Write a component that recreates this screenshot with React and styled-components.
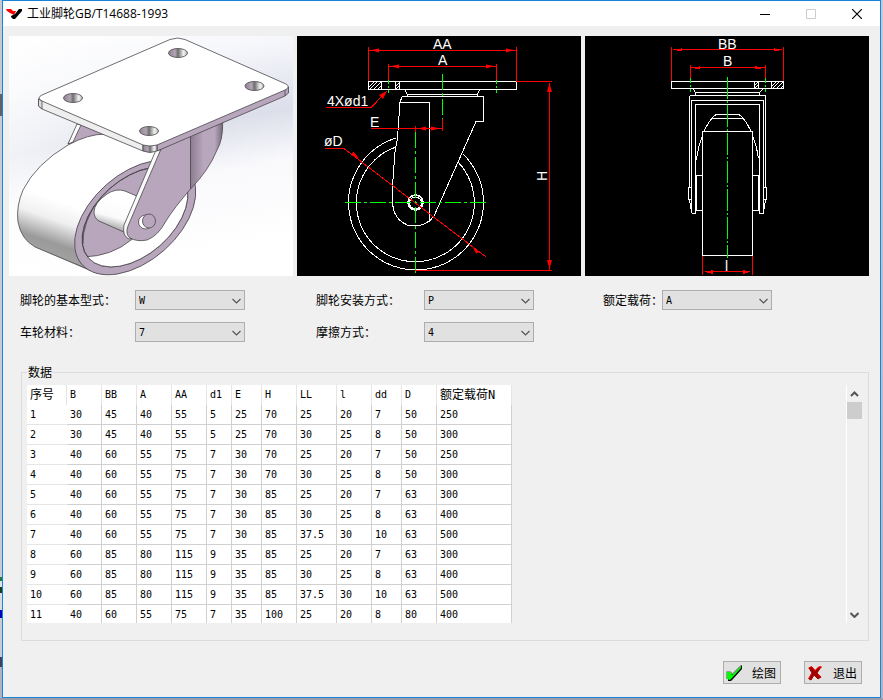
import React, { useState } from "react";
import styled, { createGlobalStyle } from "styled-components";

const columns = [
  { label: "序号", width: 40 },
  { label: "B", width: 35 },
  { label: "BB", width: 35 },
  { label: "A", width: 35 },
  { label: "AA", width: 35 },
  { label: "d1", width: 25 },
  { label: "E", width: 30 },
  { label: "H", width: 35 },
  { label: "LL", width: 40 },
  { label: "l", width: 35 },
  { label: "dd", width: 30 },
  { label: "D", width: 35 },
  { label: "额定载荷N", width: 75 },
];

const rows = [
  [1, 30, 45, 40, 55, 5, 25, 70, 25, 20, 7, 50, 250],
  [2, 30, 45, 40, 55, 5, 25, 70, 30, 25, 8, 50, 300],
  [3, 40, 60, 55, 75, 7, 30, 70, 25, 20, 7, 50, 250],
  [4, 40, 60, 55, 75, 7, 30, 70, 30, 25, 8, 50, 300],
  [5, 40, 60, 55, 75, 7, 30, 85, 25, 20, 7, 63, 300],
  [6, 40, 60, 55, 75, 7, 30, 85, 30, 25, 8, 63, 400],
  [7, 40, 60, 55, 75, 7, 30, 85, 37.5, 30, 10, 63, 500],
  [8, 60, 85, 80, 115, 9, 35, 85, 25, 20, 7, 63, 300],
  [9, 60, 85, 80, 115, 9, 35, 85, 30, 25, 8, 63, 400],
  [10, 60, 85, 80, 115, 9, 35, 85, 37.5, 30, 10, 63, 500],
  [11, 40, 60, 55, 75, 7, 35, 100, 25, 20, 8, 80, 400],
];

const fields = [
  { id: "type", label: "脚轮的基本型式：", options: ["W", "G"], width: 115 },
  { id: "mount", label: "脚轮安装方式：", options: ["P", "L"], width: 108 },
  { id: "load", label: "额定载荷：", options: ["A", "B"], width: 59 },
  { id: "material", label: "车轮材料：", options: ["7", "1"], width: 115 },
  { id: "friction", label: "摩擦方式：", options: ["4", "1"], width: 108 },
];

const CasterView = () => (
  <Drawing viewBox="9 36 284 240" role="img">
    <defs>
      <linearGradient id="sky" x1="0" y1="0" x2="0.2" y2="1">
        <stop offset="0" stopColor="#ffffff" />
        <stop offset="0.2" stopColor="#f6f7fb" />
        <stop offset="0.48" stopColor="#dcdfea" />
        <stop offset="0.68" stopColor="#f9f9fc" />
        <stop offset="1" stopColor="#ffffff" />
      </linearGradient>
      <linearGradient id="glow">
        <stop offset="0" stopColor="#fff" stopOpacity="0.6" />
        <stop offset="0.7" stopColor="#fff" stopOpacity="0" />
      </linearGradient>
      <linearGradient id="tread" x1="0.35" y1="0.5" x2="0.2" y2="0.95">
        <stop offset="0" stopColor="#ffffff" />
        <stop offset="0.3" stopColor="#f0f0f0" />
        <stop offset="0.65" stopColor="#9a9a9a" />
        <stop offset="1" stopColor="#a8a8a8" />
      </linearGradient>
      <linearGradient id="hole">
        <stop offset="0" stopColor="#8e8291" />
        <stop offset="0.35" stopColor="#b3a5b6" />
        <stop offset="0.5" stopColor="#6e6e6e" />
        <stop offset="0.8" stopColor="#f4f4f4" />
        <stop offset="1" stopColor="#aaaaaa" />
      </linearGradient>
      <linearGradient id="bend">
        <stop offset="0" stopColor="#8b7d8f" />
        <stop offset="0.4" stopColor="#b8a6bc" />
        <stop offset="0.75" stopColor="#b8a6bc" />
        <stop offset="1" stopColor="#75697a" />
      </linearGradient>
      <linearGradient id="hub" x1="0.6" y1="0.3" x2="0.4" y2="1">
        <stop offset="0" stopColor="#ffffff" />
        <stop offset="0.5" stopColor="#fafafa" />
        <stop offset="1" stopColor="#8a8a8a" />
      </linearGradient>
      <clipPath id="rim">
        <ellipse
          cx="135"
          cy="217"
          rx="62"
          ry="38"
          transform="rotate(-41.4 135 217)"
        />
      </clipPath>
    </defs>
    <rect x="9" y="36" width="284" height="240" fill="url(#sky)" />
    <rect x="9" y="36" width="284" height="240" fill="url(#glow)" />
    <g stroke="#4a474c" strokeWidth="0.8" strokeLinejoin="round">
      <path d="M79 124L105 134L92 138L68 144Z" fill="#b8a6bc" />
      <path d="M77 124L81 125L73 142L68 144Z" fill="#ffffff" />
      <path
        d="M152 160L106 134Q88 134 68 145Q36 164 23 190Q16 206 18 222Q21 239 35 247L90 271Z"
        fill="url(#tread)"
        stroke="none"
      />
      <path
        d="M106 134Q88 134 68 145Q36 164 23 190Q16 206 18 222Q21 239 35 247L90 270"
        fill="none"
      />
      <path d="M106 134L160 136L158 164L140 168Z" fill="#ffffff" stroke="none" />
      <ellipse
        cx="135.2"
        cy="217.5"
        rx="71"
        ry="43.7"
        fill="#b8a6bc"
        transform="rotate(-41.4 135.2 217.5)"
      />
      <ellipse
        cx="135"
        cy="217"
        rx="62"
        ry="38"
        fill="#b8a6bc"
        transform="rotate(-41.4 135 217)"
      />
      <g clipPath="url(#rim)">
        <path
          d="M84 257Q112 256 131 240L166 216L192 182L200 240L140 280L90 275Z"
          fill="#ffffff"
        />
        <path d="M83 244Q82 222 100 198Q122 170 156 166" fill="none" />
      </g>
      <ellipse
        cx="135"
        cy="217"
        rx="62"
        ry="38"
        fill="none"
        transform="rotate(-41.4 135 217)"
      />
      <path
        d="M139 197L125 191Q116 188 107 194Q94 203 94 212Q94 218 99 221L126 233Z"
        fill="url(#hub)"
      />
      <path d="M190.500 134L222.700 122Q223 140 217 150Q209 170 190.500 189Z" fill="url(#bend)" />
      <path
        d="M156 150L124 225Q122 236 129 239L134 238L161 150Z"
        fill="#fafafa"
      />
      <path
        d="M161 149L128 226Q125 234 130 238Q137 242 147 240Q158 236 166 221Q174 208 190.500 189L190.500 134Z"
        fill="#b8a6bc"
      />
      <ellipse cx="145.500" cy="222" rx="7" ry="7" fill="#ffffff" />
      <ellipse cx="149" cy="221" rx="6.500" ry="7" fill="#b8a6bc" />
      <path d="M38.500 99L38.500 106L42 109L143 151L143 144L42 100Z" fill="#eeeeee" />
      <path d="M38.500 99V106L42 109V101Z" fill="#dddddd" />
      <path d="M157 144L288.500 87V93L285 96L157 151Z" fill="#b8a6bc" />
      <path d="M285 89V96" />
      <path d="M143 144V151Q150 154 157 151V144Z" fill="url(#hole)" />
      <path
        d="M170 39.500Q178 36.500 185 39.500L286 84Q291 87 285 90L157 145Q150 147 143 145L42 101Q36 98 42 95Z"
        fill="#ffffff"
      />
      <g fill="url(#hole)">
        <ellipse cx="73" cy="98" rx="9.500" ry="4.500" />
        <ellipse cx="178" cy="53" rx="9.500" ry="4.500" />
        <ellipse cx="254.500" cy="86" rx="9.500" ry="4.500" />
        <ellipse cx="149" cy="131" rx="9.500" ry="4.500" />
      </g>
    </g>
  </Drawing>
);

const SideView = () => (
  <Drawing viewBox="297 36 284 240" role="img">
    <rect x="297" y="36" width="284" height="240" fill="#000" />
    <g fill="none" stroke="#fff" shapeRendering="crispEdges">
      <path d="M368.500 81.500H516.500V89.500H368.500ZM381.500 81V89M395.500 81V89M399.500 81V89" />
      <path d="M369 87L374 82M370 89L377 82M374 89L381 82M378 89L381 86M396 86L399 83M396 89L399 86" />
      <path d="M405.500 90V91L407.500 94.500H477.500L479.500 90M407.500 94V96M477.500 94V96" />
      <path d="M402 96.500H483.500V121.500H476L434 216L429.500 221V102.500H400" />
      <path d="M402 97L400 102L397.500 138L395 152L392.500 186V204Q394 219 407 225Q420 228 429 221" />
      <path d="M396 138A67.500 67.500 0 1 0 463 154" />
      <path d="M396 147A59 59 0 1 0 458 162" />
      <circle cx="415.500" cy="202.500" r="7.500" strokeWidth="1.500" />
      <circle cx="415.500" cy="203" r="6" />
    </g>
    <g fill="none" stroke="#0f0" shapeRendering="crispEdges">
      <path d="M442.500 74V119M415.500 132V275" strokeDasharray="16 3 3 3" />
      <path d="M388.500 78V93M496.500 78V93" strokeDasharray="6 2 2 2" />
      <path d="M344.500 202.500H487" strokeDasharray="16 3 3 3" />
    </g>
    <g fill="none" stroke="#f00" shapeRendering="crispEdges">
      <path d="M368.500 47V81M516.500 47V81M369 50.500H516M388.500 64V80M496.500 64V80M389 66.500H496" />
      <path d="M326 107.500H371L387 91M371 128.500H442M442.500 119V131M415.500 126V132" />
      <path d="M325 148.500H344L486 257M516 81.500H552M549.500 83V270M415 270.500H552" />
    </g>
    <g fill="#f00">
      <path d="M371 50L379 48.500V52.500ZM514 50L506 48.500V52.500ZM391 66L399 64.500V68.500ZM494 66L486 64.500V68.500Z" />
      <path d="M418 128.500L426 126.500V130.500ZM440 128.500L431 126.500V130.500Z" />
      <path d="M387 91L379 95L383 99ZM359 158.500L351 155L353.500 151.500ZM472 246L479 252L476 253.500Z" />
      <path d="M549.500 83L547 92H552ZM549.500 269L547 260H552Z" />
    </g>
    <Annotation>
      <text x="433" y="49">AA</text>
      <text x="438" y="65">A</text>
      <text x="327" y="106">4Xød1</text>
      <text x="370" y="127">E</text>
      <text x="324" y="146">øD</text>
      <text transform="translate(547 181) rotate(-90)">H</text>
    </Annotation>
  </Drawing>
);

const FrontView = () => (
  <Drawing viewBox="585 36 284 240" role="img">
    <rect x="585" y="36" width="284" height="240" fill="#000" />
    <g fill="none" stroke="#fff" shapeRendering="crispEdges">
      <path d="M671.500 81.500H783.500V88.500H671.500ZM754.500 81V88M758.500 81V88M771.500 81V88" />
      <path d="M755 85L758 82M755 88L758 85M772 86L776 82M773 88L779 82M777 88L783 82M781 88L783 86" />
      <path d="M693.500 89L695.500 92.500H759.500L763 89M695.500 92V95M759.500 92V95" />
      <path d="M690 95.500H766M689.500 96V187M765.500 96V187" />
      <path d="M691.500 213V100.500H763.500V213.500H759.500V104.500H695.500V213.500H691.500" />
      <path d="M691.500 187.500H688.500V199.500H691.500M763.500 187.500H766.500V199.500H763.500M689.500 200L691 209M765.500 200L764 209" />
      <path d="M702.500 175.500H696.500V210.500H702.500M752.500 175.500H758.500V210.500H752.500" />
      <path d="M702.500 131.500H752.500V255.500H702.500Z" />
      <path d="M704 131Q708 123 712 118L716 114.500H739L743 118Q747 123 751 131M712 118.500H743" />
      <path d="M702 137Q698 147 696.500 160M753 137Q757 147 758.500 158" />
    </g>
    <g fill="none" stroke="#f00" shapeRendering="crispEdges">
      <path d="M671.500 47V81M783.500 47V81M673 49.500H782M690.500 65V79M765.500 65V79M690 67.500H765" />
      <path d="M702.500 256V275M752.500 256V275M705 271.500H750" />
    </g>
    <g fill="#f00" shapeRendering="crispEdges">
      <path d="M676 50L682 48V51H677ZM779 50L774 48V51H779ZM694 68L700 66V69H695ZM761 68L755 66V69H760Z" />
      <path d="M705 272L713 270V274ZM750 272L743 270V274Z" />
    </g>
    <g fill="none" stroke="#0f0" shapeRendering="crispEdges">
      <path d="M727.500 77V258" strokeDasharray="22 2 2 2" />
      <path d="M690.500 78V92M765.500 78V92" strokeDasharray="5 2 2 2" />
    </g>
    <Annotation>
      <text x="718" y="49">BB</text>
      <text x="723" y="66">B</text>
      <text x="725" y="271">l</text>
    </Annotation>
  </Drawing>
);

const Chevron = ({ up, bold }) => (
  <svg width="9" height="6" viewBox="0 0 9 6">
    <path
      d={up ? "M1 5L4.500 1.500L8 5" : "M0.500 1L4.500 5L8.500 1"}
      fill="none"
      stroke="#555"
      strokeWidth={bold ? 2 : 1.2}
    />
  </svg>
);

const App = () => {
  const [values, setValues] = useState({
    type: "W",
    mount: "P",
    load: "A",
    material: "7",
    friction: "4",
  });

  return (
    <>
      <GlobalStyle />
      <Desktop>
        <Window>
          <TitleBar>
            <svg width="17" height="12" viewBox="0 0 17 12">
              <path d="M0 1H5L7 3L10 3L8 7L4 5L1 3Z" fill="#f00" />
              <path d="M5 8L9 6L13 1H16V3L9 11H7L5 9Z" fill="#000" />
            </svg>
            <Title>工业脚轮GB/T14688-1993</Title>
            <WindowButton aria-label="最小化">
              <svg width="10" height="10" viewBox="0 0 10 10">
                <path d="M0 5.500H10" stroke="#000" />
              </svg>
            </WindowButton>
            <WindowButton aria-label="最大化" disabled>
              <svg width="10" height="10" viewBox="0 0 10 10">
                <path d="M0.500 0.500H9.500V9.500H0.500Z" fill="none" stroke="#ccc" />
              </svg>
            </WindowButton>
            <WindowButton aria-label="关闭">
              <svg width="10" height="10" viewBox="0 0 10 10">
                <path d="M0 0L10 10M10 0L0 10" stroke="#000" strokeWidth="1.200" />
              </svg>
            </WindowButton>
          </TitleBar>
          <Content>
            <Previews>
              <CasterView />
              <SideView />
              <FrontView />
            </Previews>
            <Fields>
              {fields.map(({ id, label, options, width }) => (
                <Field key={id}>
                  <FieldLabel htmlFor={id} $width={width}>
                    {label}
                  </FieldLabel>
                  <SelectWrapper>
                    <Select
                      id={id}
                      value={values[id]}
                      onChange={(e) =>
                        setValues({ ...values, [id]: e.target.value })
                      }
                    >
                      {options.map((option) => (
                        <option key={option}>{option}</option>
                      ))}
                    </Select>
                    <Chevron />
                  </SelectWrapper>
                </Field>
              ))}
            </Fields>
            <GroupBox>
              <legend>数据</legend>
              <GridView>
                <GridScroll>
                  <DataTable>
                    <colgroup>
                      {columns.map(({ label, width }) => (
                        <col key={label} style={{ width }} />
                      ))}
                    </colgroup>
                    <thead>
                      <tr>
                        {columns.map(({ label }) => (
                          <th key={label} scope="col">
                            {label}
                          </th>
                        ))}
                      </tr>
                    </thead>
                    <tbody>
                      {rows.map((row) => (
                        <tr key={row[0]}>
                          {row.map((cell, index) => (
                            <td key={index}>{cell}</td>
                          ))}
                        </tr>
                      ))}
                    </tbody>
                  </DataTable>
                </GridScroll>
                <ScrollBar>
                  <ScrollButton aria-label="向上">
                    <Chevron up bold />
                  </ScrollButton>
                  <ScrollThumb />
                  <ScrollButton aria-label="向下">
                    <Chevron bold />
                  </ScrollButton>
                </ScrollBar>
              </GridView>
            </GroupBox>
            <Actions>
              <ActionButton>
                <svg width="17" height="17" viewBox="0 0 17 17">
                  <path d="M2 8L5 8L7 10L16 1V5L7 15L5 17H2Z" fill="#000" />
                  <path d="M1 8H5L6 11L15 2V4L6 14L4 16L1 15Z" fill="#0f0" />
                  <path d="M0.500 15V7.500H4.500L6 10L15 1" fill="none" stroke="#999" />
                </svg>
                绘图
              </ActionButton>
              <ActionButton>
                <svg width="17" height="17" viewBox="0 0 17 17">
                  <path
                    d="M2 4L5 3L8 7L12 3H14L10 9L14 13L11 15L7 11L4 16L2 15L5 9Z"
                    fill="#a00000"
                    stroke="#a00000"
                  />
                  <path
                    d="M1.500 4L4.500 2.500L8 6.500L11.500 3H15M1.500 15L4.500 9.500M10.500 9.500L14 13.500"
                    fill="none"
                    stroke="#f00"
                  />
                </svg>
                退出
              </ActionButton>
            </Actions>
          </Content>
        </Window>
      </Desktop>
    </>
  );
};

const GlobalStyle = createGlobalStyle`
  * {
    box-sizing: border-box;
  }
  body {
    margin: 0;
    color: #000;
    font-family: "Noto Sans CJK SC", sans-serif;
    font-size: 12px;
    line-height: 16px;
  }
  button, select {
    font-family: inherit;
    font-size: inherit;
    color: inherit;
    border-radius: 0;
    margin: 0;
  }
`;

const Desktop = styled.div`
  display: flex;
  min-height: 100vh;
  padding: 0 2px;
  border-bottom: 2px solid #9c9caa;
  background:
    linear-gradient(
      #c4c9d4 0 94px,
      #606068 94px 116px,
      #c8ccd8 116px 577px,
      #1c7a3c 577px 581px,
      #dfe2e8 581px 587px,
      #104020 587px 593px,
      #d8dce4 593px 610px,
      #0000c0 610px 618px,
      #c8ccd8 618px 657px,
      #404060 657px 667px,
      #b0b2c4 667px
    ) left / 2px 100% no-repeat,
    linear-gradient(#c4c9d4, #b0b2c4);
`;

const Window = styled.main`
  flex: 1;
  display: flex;
  flex-direction: column;
  background: #f0f0f0;
  border: 1px solid #1883d7;
`;

const TitleBar = styled.header`
  display: flex;
  align-items: center;
  height: 25px;
  padding-left: 3px;
  background: #fff;
`;

const Title = styled.h1`
  flex: 1;
  margin: 0 0 0 4px;
  font-family: "Open Sans", "Noto Sans CJK SC", sans-serif;
  font-size: 12px;
  font-weight: 400;
`;

const WindowButton = styled.button`
  display: flex;
  align-items: center;
  justify-content: center;
  width: 46px;
  height: 25px;
  padding: 0;
  border: none;
  background: none;
`;

const Content = styled.div`
  flex: 1;
  display: flex;
  flex-direction: column;
  padding: 10px 11px 13px 6px;
`;

const Previews = styled.div`
  display: grid;
  grid-template-columns: repeat(3, 1fr);
  gap: 4px;
`;

const Drawing = styled.svg`
  display: block;
  width: 100%;
`;

const Annotation = styled.g`
  fill: #fff;
  font-family: "Liberation Sans", sans-serif;
  font-size: 14px;
`;

const Fields = styled.div`
  display: grid;
  grid-template-columns: 296px 287px 1fr;
  row-gap: 12px;
  margin: 14px 0 0 11px;
`;

const Field = styled.div`
  display: flex;
  align-items: center;
`;

const FieldLabel = styled.label`
  width: ${({ $width }) => $width}px;
  white-space: nowrap;
`;

const SelectWrapper = styled.div`
  position: relative;
  width: 110px;
  svg {
    position: absolute;
    right: 4px;
    top: 8px;
    pointer-events: none;
  }
`;

const Select = styled.select`
  display: block;
  appearance: none;
  width: 100%;
  height: 20px;
  padding: 0 3px;
  border: 1px solid #adadad;
  background: #e1e1e1;
  font-family: "DejaVu Sans Mono", monospace;
  font-size: 10px;
`;

const GroupBox = styled.fieldset`
  min-width: 0;
  margin: 22px 0 0 12px;
  padding: 5px 6px 17px 5px;
  border: 1px solid #dcdcdc;
  legend {
    padding: 0 1px;
  }
`;

const GridView = styled.div`
  display: flex;
  height: 238px;
`;

const GridScroll = styled.div`
  flex: 1;
  overflow: hidden;
  border-right: 1px solid #fff;
`;

const DataTable = styled.table`
  width: 485px;
  table-layout: fixed;
  border-collapse: separate;
  border-spacing: 0;
  background: #fff;
  font-family: "DejaVu Sans Mono", "Noto Sans CJK SC", monospace;
  font-size: 10px;
  th,
  td {
    height: 20px;
    padding: 0 0 0 3px;
    line-height: 16px;
    font-weight: 400;
    text-align: left;
    white-space: nowrap;
    border-right: 1px solid #e5e5e5;
  }
  td {
    border-right-color: #d0d0d0;
    border-bottom: 1px solid #d0d0d0;
  }
  td:first-child {
    border-right-color: #fff;
    border-bottom-color: #e5e5e5;
  }
  th:first-child,
  th:last-child {
    font-size: 12px;
  }
`;

const ScrollBar = styled.div`
  display: flex;
  flex-direction: column;
  width: 15px;
`;

const ScrollButton = styled.button`
  display: flex;
  align-items: center;
  justify-content: center;
  height: 17px;
  padding: 0;
  border: none;
  background: none;
`;

const ScrollThumb = styled.div`
  height: 17px;
  margin-bottom: auto;
  background: #cdcdcd;
`;

const Actions = styled.div`
  display: flex;
  justify-content: flex-end;
  gap: 23px;
  margin-top: auto;
  padding-right: 7px;
`;

const ActionButton = styled.button`
  display: flex;
  align-items: center;
  justify-content: space-between;
  width: 58px;
  height: 23px;
  padding: 0 4px 0 2px;
  border: 1px solid #adadad;
  background: #e1e1e1;
`;

export default App;
